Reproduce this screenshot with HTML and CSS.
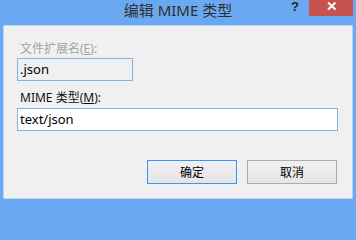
FILE: index.html
```html
<!DOCTYPE html>
<html lang="zh-CN">
<head>
<meta charset="utf-8">
<title>编辑 MIME 类型</title>
<link rel="stylesheet" href="styles.css">
</head>
<body>
<div class="window">
  <div class="titlebar">
    <div class="spacer"></div>
    <div class="title">编辑 MIME 类型</div>
    <div class="controls">
      <span class="help">?</span>
      <span class="close">
        <svg width="44" height="16" viewBox="0 0 44 16">
          <path d="M19 2.5 L26.5 9.5 M26.5 2.5 L19 9.5" stroke="#ffffff" stroke-width="2" fill="none"/>
        </svg>
      </span>
    </div>
  </div>
  <div class="client">
    <div class="field">
      <div class="label disabled">文件扩展名(<u>E</u>):</div>
      <div class="input readonly">.json</div>
    </div>
    <div class="field second">
      <div class="label">MIME 类型(<u>M</u>):</div>
      <div class="input wide">text/json</div>
    </div>
    <div class="buttons">
      <button class="btn default">确定</button>
      <button class="btn">取消</button>
    </div>
  </div>
</div>
</body>
</html>
```
FILE: styles.css
```css
html, body {
  margin: 0;
  padding: 0;
  background: #6aa9f2;
}
body {
  width: 356px;
  height: 202px;
  overflow: hidden;
  font-family: "Noto Sans", "Noto Sans CJK SC", sans-serif;
}
.window {
  width: 356px;
  height: 202px;
  background: #6aa9f2;
  display: flex;
  flex-direction: column;
}
.titlebar {
  height: 25px;
  display: grid;
  grid-template-columns: 1fr auto 1fr;
  align-items: start;
}
.title {
  font-size: 15px;
  line-height: 20px;
  color: #2e2e2e;
  white-space: nowrap;
}
.controls {
  justify-self: end;
  display: flex;
  align-items: flex-start;
  margin-right: 3px;
}
.help {
  display: block;
  width: 8px;
  height: 14px;
  margin-right: 10px;
  font-size: 13px;
  font-weight: bold;
  line-height: 14px;
  color: #222;
  font-family: "Liberation Sans", sans-serif;
}
.close {
  display: block;
  width: 44px;
  height: 16px;
  background: #c75050;
}
.close svg {
  display: block;
}
.client {
  flex: 1;
  margin: 0 3px 3px 3px;
  background: #f0f0f0;
  border: 1px solid #b9d3f2;
  padding: 15px 14px 14px 13px;
  display: flex;
  flex-direction: column;
}
.field {
  display: flex;
  flex-direction: column;
  align-items: flex-start;
}
.second {
  margin-top: 9px;
}
.label {
  font-size: 12px;
  line-height: 16px;
  padding-left: 3px;
  color: #111;
  margin-bottom: 1px;
  white-space: nowrap;
}
.second .label {
  margin-bottom: 2px;
}
.label.disabled {
  color: #a3a3a3;
}
.label u {
  text-underline-offset: 1px;
}
.input {
  box-sizing: border-box;
  height: 23px;
  border: 1px solid #7eb4ea;
  padding: 0 2px;
  font-size: 13px;
  line-height: 21px;
  color: #000;
  background: #ffffff;
}
.input.readonly {
  width: 116px;
  background: #f0f0f0;
}
.input.wide {
  align-self: stretch;
}
.buttons {
  margin-top: auto;
  display: flex;
  justify-content: flex-end;
  gap: 10px;
  padding-right: 1px;
}
.btn {
  box-sizing: border-box;
  width: 90px;
  height: 24px;
  margin: 0;
  padding: 0;
  border: 1px solid #acacac;
  background: linear-gradient(#f0f0f0, #e5e5e5);
  font-family: "Noto Sans", "Noto Sans CJK SC", sans-serif;
  font-size: 12px;
  color: #000;
}
.btn.default {
  border-color: #3399ff;
}
```
